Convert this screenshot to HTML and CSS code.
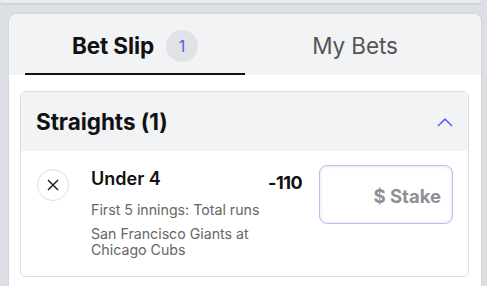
FILE: index.html
```html
<!DOCTYPE html>
<html>
<head>
<meta charset="utf-8">
<link rel="stylesheet" href="styles.css">
</head>
<body>
<div class="top-card"></div>
<div class="slip">
  <div class="tabs">
    <div class="tab active">
      <span class="tab-label">Bet Slip</span>
      <span class="badge">1</span>
    </div>
    <div class="tab">
      <span class="tab-label">My Bets</span>
    </div>
  </div>
  <div class="content">
    <div class="group">
      <div class="group-head">
        <span class="group-title">Straights (1)</span>
        <svg class="chev" width="16" height="9" viewBox="0 0 16 9"><path d="M1 8 L8 1.2 L15 8" fill="none" stroke="#5468ff" stroke-width="1.6"/></svg>
      </div>
      <div class="bet">
        <div class="close">
          <svg width="12" height="12" viewBox="0 0 12 12"><path d="M1 1 L11 11 M11 1 L1 11" stroke="#222" stroke-width="1.5"/></svg>
        </div>
        <div class="info">
          <div class="pick">Under 4</div>
          <div class="market">First 5 innings: Total runs</div>
          <div class="event">San Francisco Giants at Chicago Cubs</div>
        </div>
        <div class="odds">-110</div>
        <div class="stake">$ Stake</div>
      </div>
    </div>
  </div>
</div>
</body>
</html>
```

FILE: styles.css
```css
* { box-sizing: border-box; }
html, body { margin: 0; padding: 0; }
body {
  background: #dcdfe3;
  font-family: Inter, "Noto Sans", sans-serif;
  width: 487px;
  height: 286px;
  overflow: hidden;
}
.top-card {
  height: 3px;
  margin-right: 6px;
  background: #e9ebee;
  border-radius: 0 0 6px 6px;
  box-shadow: 0 1px 3px rgba(0,0,0,0.12);
}
.slip {
  margin: 11px 6px 0 9px;
  background: #fff;
  border-radius: 8px 8px 0 0;
  box-shadow: 0 0 3px rgba(0,0,0,0.1);
  height: 280px;
}
.tabs {
  display: flex;
  background: #f2f3f5;
  padding: 0 16px;
  height: 61px;
  border-radius: 8px 8px 0 0;
}
.tab {
  flex: 1;
  display: flex;
  align-items: center;
  justify-content: center;
  gap: 12px;
  padding-top: 4px;
  border-bottom: 2px solid transparent;
}
.tab.active { border-bottom-color: #111; }
.tab-label {
  font-size: 22.5px;
  color: #555;
  letter-spacing: -0.1px;
}
.tab.active .tab-label { font-weight: 700; color: #111; }
.badge {
  width: 32px;
  height: 32px;
  border-radius: 50%;
  background: #e0e2e6;
  color: #4b5fe6;
  font-size: 16px;
  display: flex;
  align-items: center;
  justify-content: center;
}
.content { padding: 16px 12px 0 11px; }
.group {
  border: 1px solid #dcdee2;
  border-radius: 6px;
  overflow: hidden;
}
.group-head {
  background: #f2f3f5;
  height: 59px;
  display: flex;
  align-items: center;
  justify-content: space-between;
  padding: 0 15px 0 15px;
}
.group-title {
  font-size: 22.5px;
  font-weight: 700;
  color: #111;
  letter-spacing: -0.05px;
}
.chev { margin-top: 2px; }
.bet {
  display: flex;
  align-items: flex-start;
  padding: 17px 15px 17px 16px;
}
.close {
  width: 32px;
  height: 32px;
  border-radius: 50%;
  border: 1px solid #dcdee2;
  display: flex;
  align-items: center;
  justify-content: center;
  flex: none;
  margin-top: 1px;
}
.info {
  width: 177px;
  margin-left: 22px;
  color: #666;
  font-size: 14.2px;
  line-height: 16.5px;
}
.pick {
  font-size: 18px;
  font-weight: 600;
  color: #111;
  line-height: 22px;
  margin-bottom: 12px;
}
.market { margin-bottom: 7px; }
.odds {
  font-size: 18px;
  font-weight: 700;
  color: #111;
  margin-top: 4px;
  letter-spacing: -0.5px;
}
.stake {
  margin-left: auto;
  margin-top: -3px;
  width: 134px;
  height: 59px;
  border: 1px solid #b4bdf4;
  border-radius: 8px;
  box-shadow: inset 0 0 4px rgba(0,0,0,0.12);
  display: flex;
  align-items: center;
  justify-content: flex-end;
  padding: 3px 11px 0 0;
  font-size: 18.5px;
  font-weight: 700;
  color: #8d9096;
}
```
